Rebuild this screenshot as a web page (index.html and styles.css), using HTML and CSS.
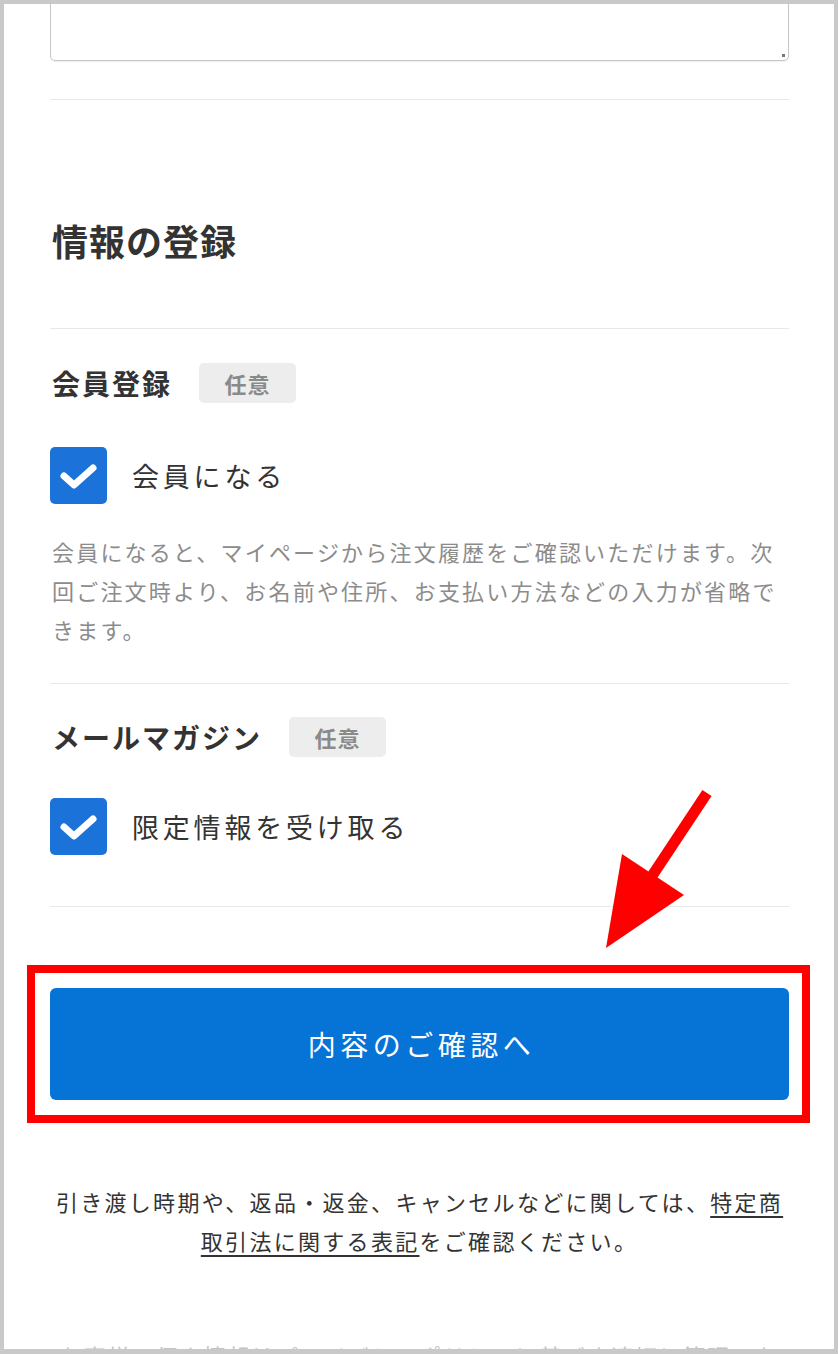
FILE: index.html
```html
<!DOCTYPE html>
<html lang="ja">
<head>
<meta charset="utf-8">
<title>情報の登録</title>
<link rel="stylesheet" href="styles.css">
</head>
<body>
<div class="panel">
  <div class="textarea"><span class="grip"></span></div>
  <div class="rule rule-top"></div>

  <h2 class="heading">情報の登録</h2>
  <div class="rule rule-heading"></div>

  <section class="field">
    <div class="field-head">
      <span class="field-title">会員登録</span>
      <span class="badge">任意</span>
    </div>
    <label class="check check-member">
      <span class="box"><svg viewBox="0 0 57 57" width="57" height="57"><polyline points="14,29 24,38 43,21" fill="none" stroke="#fff" stroke-width="7" stroke-linecap="round" stroke-linejoin="round"/></svg></span>
      <span class="check-label">会員になる</span>
    </label>
    <p class="desc">会員になると、マイページから注文履歴をご確認いただけます。次回ご注文時より、お名前や住所、お支払い方法などの入力が省略できます。</p>
  </section>
  <div class="rule rule-mid"></div>

  <section class="field">
    <div class="field-head field-head-mail">
      <span class="field-title">メールマガジン</span>
      <span class="badge">任意</span>
    </div>
    <label class="check check-mail">
      <span class="box"><svg viewBox="0 0 57 57" width="57" height="57"><polyline points="14,29 24,38 43,21" fill="none" stroke="#fff" stroke-width="7" stroke-linecap="round" stroke-linejoin="round"/></svg></span>
      <span class="check-label">限定情報を受け取る</span>
    </label>
  </section>
  <div class="rule rule-bottom"></div>

  <button class="submit" type="button">内容のご確認へ</button>

  <p class="note">引き渡し時期や、返品・返金、キャンセルなどに関しては、<a href="#" class="link">特定商取引法に関する表記</a>をご確認ください。</p>
  <p class="faint">お客様の個人情報はプライバシーポリシーに基づき適切に管理いたします。</p>
</div>

<div class="highlight"></div>
<svg class="arrow" width="838" height="1354" viewBox="0 0 838 1354">
  <line x1="707" y1="793" x2="648" y2="882" stroke="#ff0000" stroke-width="11"/>
  <polygon points="606,948 622,854 684,895" fill="#ff0000"/>
</svg>
</body>
</html>
```
FILE: styles.css
```css
* { box-sizing: border-box; }
html, body { margin: 0; padding: 0; }
body {
  width: 838px;
  height: 1354px;
  background: #c9c9c9;
  padding: 4px 4px 5px 4px;
  font-family: "Noto Sans CJK JP", "Noto Sans", sans-serif;
  color: #333;
  position: relative;
  overflow: hidden;
}
.panel {
  background: #fff;
  height: 1345px;
  overflow: hidden;
  padding: 0 45px 0 46px;
}
.textarea {
  position: relative;
  height: 77px;
  margin-top: -20px;
  border: 1px solid #c6c6c6;
  border-radius: 5px;
  box-shadow: 0 1px 1px rgba(0,0,0,0.06);
}
.grip {
  position: absolute;
  right: 3px;
  bottom: 3px;
  width: 3px;
  height: 3px;
  background: #777;
}
.rule { height: 1px; background: #e8e8e8; }
.rule-top { margin-top: 38px; }
.heading {
  margin: 115px 0 0 2px;
  font-size: 36px;
  line-height: 50px;
  font-weight: 700;
  letter-spacing: 1px;
  color: #333;
}
.rule-heading { margin-top: 63px; }
.field-head {
  display: flex;
  align-items: center;
  gap: 27px;
  height: 40px;
  margin-top: 34px;
}
.field-head-mail { margin-top: 33px; }
.field-title {
  font-size: 28px;
  font-weight: 700;
  letter-spacing: 2px;
  line-height: 40px;
  padding-left: 2px;
  color: #333;
}
.badge {
  width: 97px;
  height: 40px;
  border-radius: 5px;
  background: #ededed;
  color: #8a8a8a;
  font-size: 22px;
  font-weight: 700;
  letter-spacing: 1px;
  display: flex;
  align-items: center;
  justify-content: center;
}
.check {
  display: flex;
  align-items: center;
  gap: 25px;
  margin-top: 44px;
}
.check-mail { margin-top: 41px; }
.box {
  width: 57px;
  height: 57px;
  border-radius: 5px;
  background: #1b73d9;
  display: block;
}
.box svg { display: block; }
.check-label {
  font-size: 27px;
  letter-spacing: 3.8px;
  color: #333;
  line-height: 40px;
}
.desc {
  margin: 28px 0 0 2px;
  font-size: 22px;
  line-height: 39px;
  letter-spacing: 2.2px;
  color: #8c8c8c;
}
.rule-mid { margin-top: 34px; }
.rule-bottom { margin-top: 51px; }
.submit {
  display: block;
  width: 100%;
  height: 112px;
  margin-top: 81px;
  border: none;
  border-radius: 6px;
  background: #0673d7;
  color: #fff;
  font-family: "Noto Sans CJK JP", "Noto Sans", sans-serif;
  font-size: 28px;
  letter-spacing: 4.5px;
  padding: 0 0 0 4px;
}
.note {
  margin: 82px 0 0;
  font-size: 22px;
  line-height: 39px;
  letter-spacing: 2.3px;
  text-align: center;
  color: #333;
}
.link {
  color: #333;
  text-decoration: underline;
  text-underline-offset: 5px;
}
.faint {
  margin: 76px 0 0;
  font-size: 22px;
  line-height: 39px;
  letter-spacing: 2px;
  text-align: center;
  color: #c4c4c4;
}
.highlight {
  position: absolute;
  left: 27px;
  top: 965px;
  width: 783px;
  height: 158px;
  border: 8px solid #ff0000;
}
.arrow {
  position: absolute;
  left: 0;
  top: 0;
  pointer-events: none;
}
```
